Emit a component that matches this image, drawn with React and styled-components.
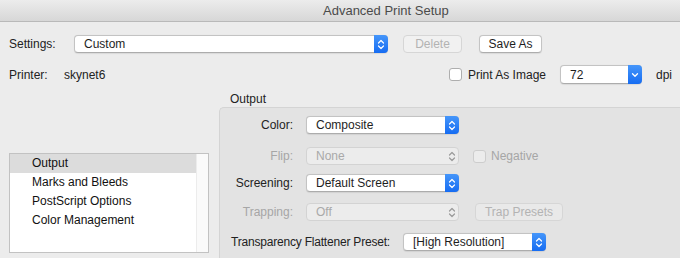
import React from "react";
import styled, { createGlobalStyle, css } from "styled-components";

const Global = createGlobalStyle`
  html, body { margin: 0; padding: 0; background: #ececec; }
  body { font-family: "Liberation Sans", Arial, sans-serif; font-size: 12px; color: #222; }
`;

const Window = styled.div`
  width: 680px;
  height: 258px;
  overflow: hidden;
  background: #ececec;
  display: flex;
  flex-direction: column;
`;

const TitleBar = styled.div`
  height: 21px;
  flex: none;
  border-bottom: 1px solid #b9b9b9;
  background: linear-gradient(#ececec, #d7d7d7);
  padding-left: 323px;
  line-height: 22px;
  font-size: 13px;
  color: #4b4b4b;
`;

const Main = styled.div`
  padding: 13px 0 0 9px;
  display: flex;
  flex-direction: column;
  flex: 1;
`;

const Row = styled.div`
  display: flex;
  align-items: center;
  height: ${(p) => p.$h || 18}px;
  margin-top: ${(p) => p.$mt || 0}px;
`;

const Label = styled.div`
  width: ${(p) => (p.$w ? `${p.$w}px` : "auto")};
  flex: none;
  text-align: ${(p) => p.$align || "left"};
  color: ${(p) => (p.$disabled ? "#a6a6a6" : "#222")};
  letter-spacing: ${(p) => p.$ls || 0}px;
  white-space: nowrap;
`;

const Text = styled.span`
  color: ${(p) => (p.$disabled ? "#a6a6a6" : "#222")};
  margin-left: ${(p) => p.$ml || 0}px;
  white-space: nowrap;
`;

const SelectBox = styled.div`
  position: relative;
  box-sizing: border-box;
  width: ${(p) => p.$w}px;
  height: ${(p) => p.$h || 18}px;
  margin-left: ${(p) => p.$ml || 0}px;
  flex: none;
  border-radius: 4px;
  display: flex;
  align-items: center;
  padding-left: 9px;
  ${(p) =>
    p.$disabled
      ? css`
          background: #ececec;
          border: 1px solid #d3d3d3;
          color: #a9a9a9;
        `
      : css`
          background: #fff;
          border: 1px solid #c3c3c3;
          border-bottom-color: #acacac;
          box-shadow: 0 0.5px 1px rgba(0, 0, 0, 0.08);
          color: #1e1e1e;
        `}
`;

const Stepper = styled.div`
  position: absolute;
  top: -1px;
  right: -1px;
  bottom: -1px;
  width: 14px;
  border-radius: 0 4px 4px 0;
  display: flex;
  align-items: center;
  justify-content: center;
  ${(p) =>
    p.$disabled
      ? css`
          background: transparent;
        `
      : css`
          background: linear-gradient(#4596fa, #166cf2);
        `}
`;

const Button = styled.div`
  box-sizing: border-box;
  width: ${(p) => p.$w}px;
  height: ${(p) => p.$h || 18}px;
  margin-left: ${(p) => p.$ml || 0}px;
  flex: none;
  border-radius: 4px;
  display: flex;
  align-items: center;
  justify-content: center;
  ${(p) =>
    p.$disabled
      ? css`
          background: ${p.$onPanel ? "#e9e9e9" : "#f1f1f1"};
          border: 1px solid #d6d6d6;
          color: #b3b3b3;
        `
      : css`
          background: #fff;
          border: 1px solid #c4c4c4;
          border-bottom-color: #adadad;
          box-shadow: 0 0.5px 1px rgba(0, 0, 0, 0.08);
          color: #1e1e1e;
        `}
`;

const Check = styled.div`
  box-sizing: border-box;
  width: 13px;
  height: 13px;
  flex: none;
  margin-left: ${(p) => p.$ml || 0}px;
  border-radius: 3px;
  background: ${(p) => (p.$disabled ? "#ececec" : "#fff")};
  border: 1px solid ${(p) => (p.$disabled ? "#cdcdcd" : "#aeaeae")};
`;

const Spacer = styled.div`
  flex: ${(p) => (p.$w ? "none" : 1)};
  width: ${(p) => (p.$w ? `${p.$w}px` : "auto")};
`;

const Body = styled.div`
  display: flex;
  margin-top: 8px;
  flex: 1;
`;

const LeftCol = styled.div`
  width: 210px;
  flex: none;
  padding-top: 61px;
`;

const List = styled.div`
  box-sizing: border-box;
  width: 200px;
  height: 100px;
  background: #fff;
  border: 1px solid #c2c2c2;
  display: flex;
`;

const Items = styled.div`
  flex: 1;
`;

const Track = styled.div`
  width: 11px;
  background: #fafafa;
  border-left: 1px solid #ececec;
`;

const Item = styled.div`
  height: 19px;
  line-height: 19px;
  padding-left: 22px;
  background: ${(p) => (p.$selected ? "#dcdcdc" : "transparent")};
  color: #111;
`;

const RightCol = styled.div`
  flex: 1;
  display: flex;
  flex-direction: column;
`;

const Heading = styled.div`
  height: 15px;
  line-height: 14px;
  padding-left: 11px;
  color: #222;
`;

const Panel = styled.div`
  flex: 1;
  background: #e3e3e3;
  border-top: 1px solid #d4d4d4;
  border-left: 1px solid #d4d4d4;
  border-top-left-radius: 5px;
  padding: 8px 0 0 11px;
  display: flex;
  flex-direction: column;
`;

const PanelRow = styled(Row)`
  margin-top: ${(p) => p.$mt || 0}px;
`;

const UpDown = ({ color }) => (
  <svg width="8" height="11" viewBox="0 0 8 11">
    <path d="M1.5 4 L4 1.5 L6.5 4 M1.5 7 L4 9.5 L6.5 7" fill="none" stroke={color} strokeWidth="1.2" strokeLinecap="round" strokeLinejoin="round" />
  </svg>
);

const Down = () => (
  <svg width="8" height="6" viewBox="0 0 8 6">
    <path d="M1.5 1.8 L4 4.3 L6.5 1.8" fill="none" stroke="#fff" strokeWidth="1.3" strokeLinecap="round" strokeLinejoin="round" />
  </svg>
);

const Select = ({ value, w, h, ml, disabled, single }) => (
  <SelectBox $w={w} $h={h} $ml={ml} $disabled={disabled}>
    {value}
    <Stepper $disabled={disabled}>
      {single ? <Down /> : <UpDown color={disabled ? "#9a9a9a" : "#fff"} />}
    </Stepper>
  </SelectBox>
);

const FormRow = ({ label, disabled, mt, children }) => (
  <PanelRow $mt={mt}>
    <Label $w={62} $align="right" $disabled={disabled}>{label}</Label>
    {children}
  </PanelRow>
);

export default function App() {
  return (
    <>
      <Global />
      <Window>
        <TitleBar>Advanced Print Setup</TitleBar>
        <Main>
          <Row>
            <Label $w={65}>Settings:</Label>
            <Select value="Custom" w={314} />
            <Button $w={59} $ml={15} $disabled>Delete</Button>
            <Button $w={63} $ml={17}>Save As</Button>
          </Row>
          <Row $h={19} $mt={12}>
            <Label $w={55}>Printer:</Label>
            <Text>skynet6</Text>
            <Spacer />
            <Check />
            <Text $ml={6}>Print As Image</Text>
            <Select value="72" w={82} h={19} ml={14} single />
            <Text $ml={14}>dpi</Text>
            <Spacer $w={8} />
          </Row>
          <Body>
            <LeftCol>
              <List>
                <Items>
                  <Item $selected>Output</Item>
                  <Item>Marks and Bleeds</Item>
                  <Item>PostScript Options</Item>
                  <Item>Color Management</Item>
                </Items>
                <Track />
              </List>
            </LeftCol>
            <RightCol>
              <Heading>Output</Heading>
              <Panel>
                <FormRow label="Color:">
                  <Select value="Composite" w={153} ml={13} />
                </FormRow>
                <FormRow label="Flip:" disabled mt={13}>
                  <Select value="None" w={153} ml={13} disabled />
                  <Check $ml={14} $disabled />
                  <Text $ml={5} $disabled>Negative</Text>
                </FormRow>
                <FormRow label="Screening:" mt={9}>
                  <Select value="Default Screen" w={153} ml={13} />
                </FormRow>
                <FormRow label="Trapping:" disabled mt={11}>
                  <Select value="Off" w={153} ml={13} disabled />
                  <Button $w={88} $ml={16} $disabled $onPanel>Trap Presets</Button>
                </FormRow>
                <PanelRow $mt={12}>
                  <Label $ls={-0.2}>Transparency Flattener Preset:</Label>
                  <Select value="[High Resolution]" w={143} ml={13} />
                </PanelRow>
              </Panel>
            </RightCol>
          </Body>
        </Main>
      </Window>
    </>
  );
}
